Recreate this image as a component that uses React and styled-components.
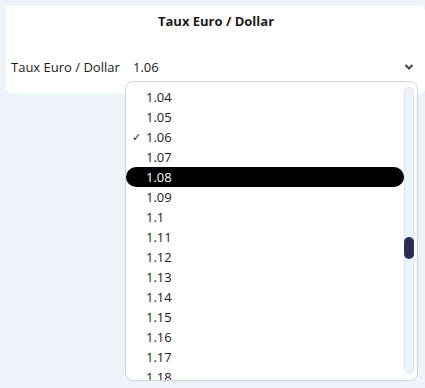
import React from "react";
import styled, { createGlobalStyle } from "styled-components";

const GlobalStyle = createGlobalStyle`
  html, body {
    margin: 0;
    background: #eef2f9;
    font-family: "Open Sans", "Noto Sans", sans-serif;
    color: #1b1b1b;
  }
  body {
    padding: 6px 0 0 6px;
    height: 388px;
    box-sizing: border-box;
    overflow: hidden;
  }
`;

const Card = styled.div`
  width: 420px;
  height: 88px;
  background: #ffffff;
  border-radius: 0 8px 8px 8px;
  box-sizing: border-box;
  padding: 7px 0 0 5px;
  display: flex;
  flex-direction: column;
`;

const Title = styled.div`
  text-align: center;
  font-size: 13px;
  font-weight: 700;
  line-height: 16px;
  padding-right: 5px;
`;

const Row = styled.div`
  display: flex;
  align-items: center;
  margin-top: 30px;
  height: 16px;
`;

const Label = styled.div`
  font-size: 13px;
  line-height: 16px;
  width: 122px;
`;

const Select = styled.div`
  position: relative;
  flex: 1;
  display: flex;
  align-items: center;
  justify-content: space-between;
  font-size: 13px;
  line-height: 16px;
  padding-right: 10px;
`;

const Chevron = styled.svg`
  width: 10px;
  height: 8px;
  margin-right: 2px;
  margin-top: 0;
`;

const Menu = styled.div`
  position: absolute;
  top: 22px;
  left: -8px;
  width: 293px;
  height: 300px;
  background: #ffffff;
  border: 1px solid #cfd3da;
  border-radius: 8px;
  box-sizing: border-box;
  overflow: hidden;
  padding-top: 5px;
`;

const Item = styled.div`
  position: relative;
  height: 20px;
  line-height: 20px;
  font-size: 13px;
  padding-left: 20px;
  width: 278px;
  box-sizing: border-box;
  border-radius: 10px;
  background: ${(p) => (p.$active ? "#000000" : "transparent")};
  color: ${(p) => (p.$active ? "#ffffff" : "#1b1b1b")};
`;

const Check = styled.span`
  position: absolute;
  left: 6px;
  top: 0;
  font-size: 11px;
`;

const Track = styled.div`
  position: absolute;
  top: 5px;
  right: 3px;
  width: 10px;
  height: 287px;
  background: #eef3fb;
  border: 1px solid #dde4f0;
  border-radius: 6px;
  box-sizing: border-box;
`;

const Thumb = styled.div`
  position: absolute;
  top: 149px;
  left: -1px;
  width: 10px;
  height: 22px;
  border-radius: 5px;
  background: #283152;
`;

const values = [
  "1.04", "1.05", "1.06", "1.07", "1.08", "1.09", "1.1", "1.11",
  "1.12", "1.13", "1.14", "1.15", "1.16", "1.17", "1.18",
];

export default function App() {
  return (
    <>
      <GlobalStyle />
      <Card>
        <Title>Taux Euro / Dollar</Title>
        <Row>
          <Label>Taux Euro / Dollar</Label>
          <Select>
            <span>1.06</span>
            <Chevron viewBox="0 0 10 8">
              <path d="M1.5 2 L5 5.5 L8.5 2" fill="none" stroke="#444" strokeWidth="2" />
            </Chevron>
            <Menu>
              {values.map((v) => (
                <Item key={v} $active={v === "1.08"}>
                  {v === "1.06" && <Check>✓</Check>}
                  {v}
                </Item>
              ))}
              <Track>
                <Thumb />
              </Track>
            </Menu>
          </Select>
        </Row>
      </Card>
    </>
  );
}
